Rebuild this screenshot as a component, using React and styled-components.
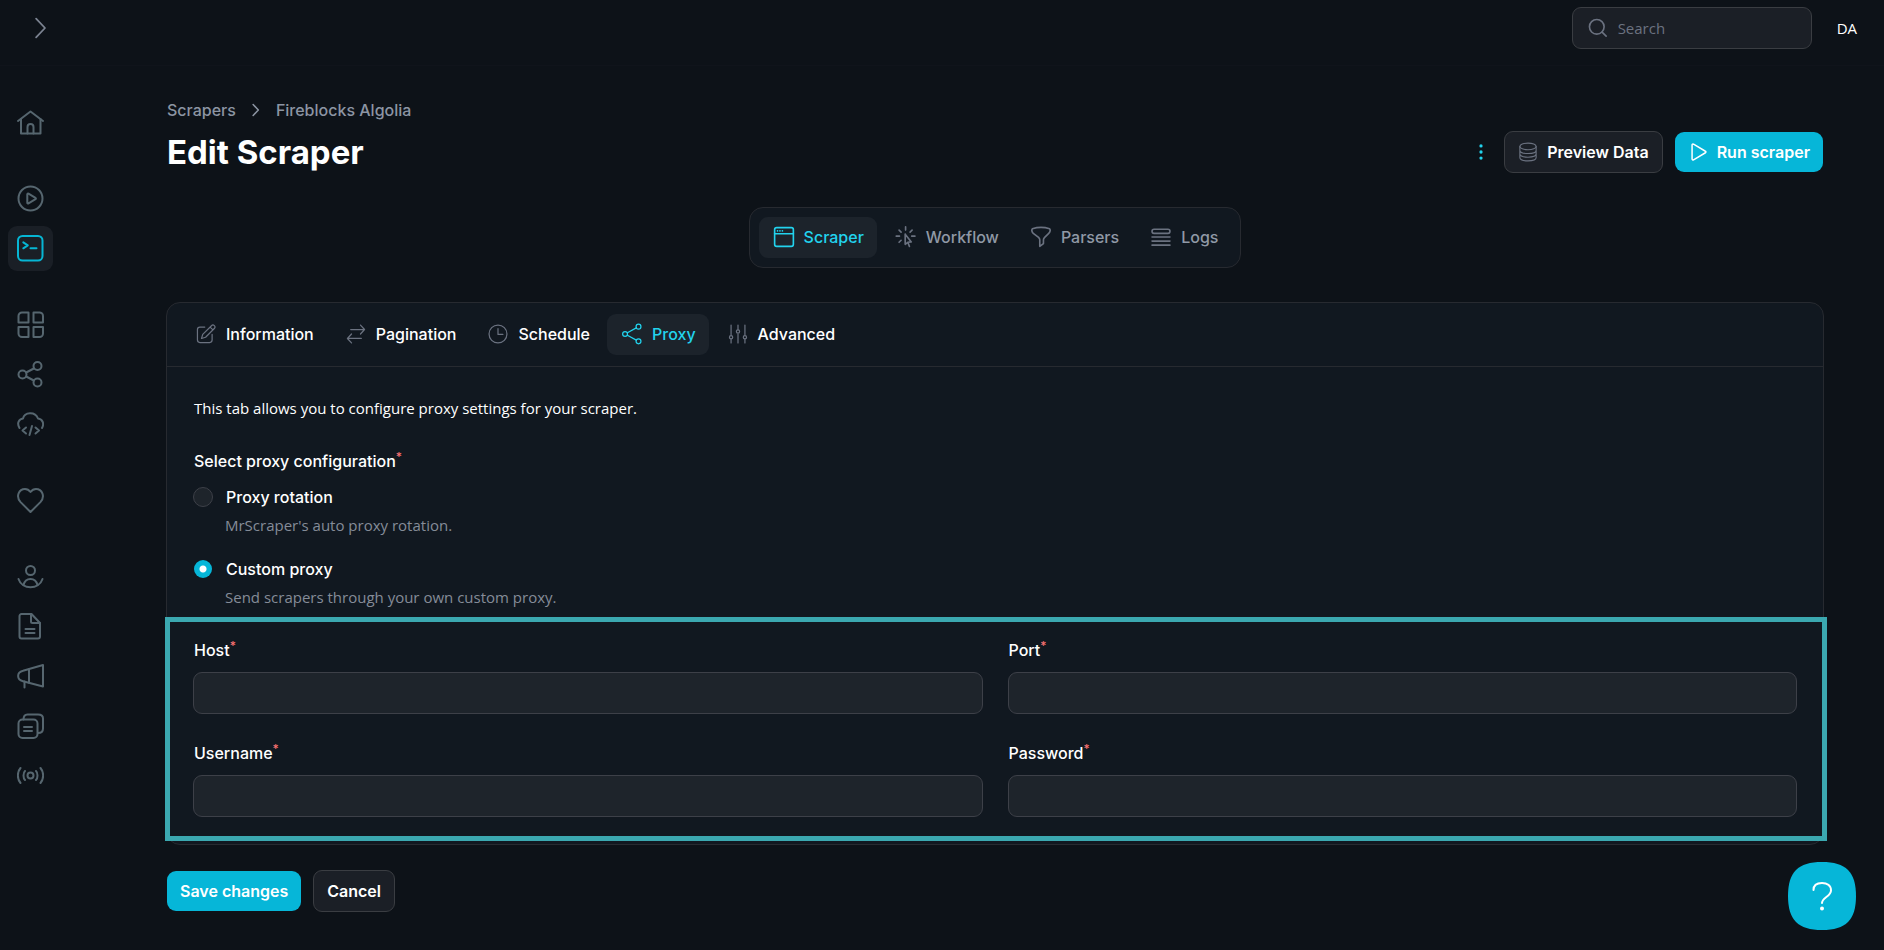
import { useState } from 'react'
import styled, { createGlobalStyle, css } from 'styled-components'

const icons = {
  home: <><path d='M1 12 13.5 2.5 26 12' /><path d='M4 10v14.5h19.5V10' /><path d='M10.5 24.5v-6.5a3 3 0 0 1 6 0v6.5' /></>,
  play: <><circle cx='13.5' cy='13.5' r='12' /><path d='M10.3 9.3v8.4a.8.8 0 0 0 1.2.7l7-4.2a.8.8 0 0 0 0-1.4l-7-4.2a.8.8 0 0 0-1.2.7z' /></>,
  terminal: <><rect x='1' y='1' width='24.5' height='24.5' rx='4.5' /><path d='m6.3 7.3 4.5 3-4.5 3M13.5 13.3h6' /></>,
  grid: <><path d='M5 1.5h6.5v10h-10V5A3.5 3.5 0 0 1 5 1.500z' /><path d='M16.5 1.500H22A3.5 3.5 0 0 1 26 5v6.5h-9.500z' /><path d='M1.5 16h10v10H5a3.5 3.5 0 0 1-3.5-3.500z' /><path d='M16.500 16H26v6.500a3.5 3.5 0 0 1-3.5 3.5h-6z' /></>,
  share: <><circle cx='5.5' cy='13.5' r='4' /><circle cx='20.5' cy='5' r='4' /><circle cx='20.5' cy='21.5' r='4' /><path d='m9.2 11.500 7.600-4M9.2 15.500l7.600 4' /></>,
  cloud: <><path d='M2.500 17C-.5 12 2 8 6 7.500c1.500-6.500 12-7.500 15 0 4.500.5 6.500 5 4 9.500' /><path d='m9 16.500-3.500 3 3.500 3M18.500 16.500l3.500 3-3.500 3M15 15l-2.500 9' /></>,
  heart: <path d='M13.500 25 3.600 15.100C-1.600 9.500 2 2 8 2c2.300 0 4 1 5.500 3C15 3 16.700 2 19 2c6 0 9.600 7.500 4.400 13.100z' />,
  user: <><circle cx='13.5' cy='7.5' r='4.500' /><path d='M1.500 16c3.500 11 20.500 11 24 0' /><path d='M6.500 22c2-8 12-8 14 0' /></>,
  file: <><path d='M4.500 1h10l8.500 9v13.500a2 2 0 0 1-2 2H4.500a2 2 0 0 1-2-2V3a2 2 0 0 1 2-2z' /><path d='M14 1v7.500a1.500 1.500 0 0 0 1.500 1.500H23M8.500 16h9M8.500 20h9' /></>,
  megaphone: <><path d='M26 2v21.500L6 18.300C-.5 16.500-.5 9.500 6 7.800z' /><path d='M12 6.300v13.500M7.500 18.500v6' /></>,
  copy: <><rect x='1.5' y='6.5' width='19' height='18.500' rx='4' /><path d='M6.500 6.500c0-4 1.500-5 4-5H21c3.500 0 5 1.500 5 4v10c0 3-1.500 4.500-5 4.500M7 14h8M7 18h8' /></>,
  signal: <><circle cx='13.5' cy='12.5' r='3' /><path d='M8 8c-2 2-2 7 0 9M19 8c2 2 2 7 0 9M3.500 5c-3.500 4-3.500 11 0 15M23.500 5c3.500 4 3.500 11 0 15' /></>,
  next: <path d='m8 3 10 10.500L8 24' />,
  search: <><circle cx='12' cy='12' r='9' /><path d='m18.500 18.500 5 5' /></>,
  dots: <g fill='currentColor' stroke='none'><circle cx='13.5' cy='6' r='2' /><circle cx='13.5' cy='13.5' r='2' /><circle cx='13.5' cy='21' r='2' /></g>,
  database: <><ellipse cx='13.5' cy='6' rx='11' ry='4.500' /><path d='M2.500 6v15c0 6 22 6 22 0V6M2.500 11c0 6 22 6 22 0M2.500 16c0 6 22 6 22 0' /></>,
  run: <path d='M5.500 4v19c0 1 1 1.500 2 1l16-9.500c.9-.5.9-1.500 0-2l-16-9.500c-1-.5-2 0-2 1z' />,
  browser: <><rect x='2' y='2' width='23' height='23' rx='2.500' /><path d='M2 9.500h23M5.500 6h.1M8.500 6h.1M11.500 6h.1' /></>,
  pointer: <><path d='M13 1v4M5 5l2.500 2.500M21 5l-2.500 2.500M1.500 12.500h4M20.500 12.500h4M7.500 17.500 5 20' /><path d='M12.500 10v12.500l3.200-2.500 2 5M12.500 10l7.500 9.500-4.300.5' /></>,
  funnel: <path d='M3 3.500C9 1.500 18 1.500 24 3.500c1.500 2 .5 4-1 5.500l-5 5c-1 1-1.500 2-1.500 3v4.500l-4.500 3.500V17c0-1-.5-2-1.500-3L4 9C2.500 7.500 1.500 5.500 3 3.500z' />,
  rows: <><rect x='2.5' y='4' width='22' height='5' rx='2.500' /><path d='M2.500 13.500h22M2.500 18.500h22M2.500 23.500h22' /></>,
  edit: <><path d='M12 5H6a3 3 0 0 0-3 3v13a3 3 0 0 0 3 3h12a3 3 0 0 0 3-3v-7' /><path d='m8 19 1.500-5L20.500 3c2-2 5.500 1.500 3.500 3.500L13 17.500zM18.500 5l3.500 3.500' /></>,
  arrows: <><path d='M7 8h17l-5-5.500M24 8l-5 5.500' /><path d='M20 19H3l5-5.500M3 19l5 5.500' /></>,
  clock: <><circle cx='13.5' cy='13.5' r='11' /><path d='M13.500 7v7h6' /></>,
  network: <><circle cx='5' cy='13.5' r='3' /><circle cx='21.5' cy='4.500' r='3' /><circle cx='21.5' cy='22.500' r='3' /><path d='M7.800 12 18.800 6M7.800 15l11 6' /></>,
  sliders: <><path d='M5 2.500v12M5 20v4.500M13.500 2.500V8M13.500 13.500v11M22 2.500v12M22 20v4.500' /><circle cx='5' cy='17.5' r='2' /><circle cx='13.5' cy='10.5' r='2' /><circle cx='22' cy='17.5' r='2' /></>
}

const Icon = ({ name, size = 22, stroke = 1.5 }) => (
  <Svg
    width={size}
    height={size}
    viewBox='0 0 27 27'
    fill='none'
    stroke='currentColor'
    strokeWidth={stroke}
    strokeLinecap='round'
    strokeLinejoin='round'
    aria-hidden='true'
  >
    {icons[name]}
  </Svg>
)

const sideGroups = [
  ['home'],
  ['play', 'terminal'],
  ['grid', 'share', 'cloud'],
  ['heart'],
  ['user', 'file', 'megaphone', 'copy', 'signal']
]

const pageTabs = [
  ['Scraper', 'browser'],
  ['Workflow', 'pointer'],
  ['Parsers', 'funnel'],
  ['Logs', 'rows']
]

const formTabs = [
  ['Information', 'edit'],
  ['Pagination', 'arrows'],
  ['Schedule', 'clock'],
  ['Proxy', 'network'],
  ['Advanced', 'sliders']
]

const fields = [
  ['host', 'Host', 'text'],
  ['port', 'Port', 'text'],
  ['username', 'Username', 'text'],
  ['password', 'Password', 'password']
]

const App = () => {
  const [page, setPage] = useState('Scraper')
  const [tab, setTab] = useState('Proxy')
  const [proxy, setProxy] = useState('custom')

  return (
    <>
      <GlobalStyle />
      <Header>
        <IconBtn aria-label='Expand sidebar'>
          <Icon name='next' size={24} stroke={2} />
        </IconBtn>
        <HeaderRight>
          <SearchBox>
            <Icon name='search' stroke={2} />
            <SearchInput type='search' placeholder='Search' aria-label='Search' />
          </SearchBox>
          <UserBtn>DA</UserBtn>
        </HeaderRight>
      </Header>

      <Layout>
        <Sidebar>
          {sideGroups.map((group) => (
            <SideGroup key={group[0]}>
              {group.map((name) => (
                <SideLink key={name} href={`#${name}`} aria-label={name} $active={name === 'terminal'}>
                  <Icon name={name} size={27} stroke={2} />
                </SideLink>
              ))}
            </SideGroup>
          ))}
        </Sidebar>

        <Main>
          <Breadcrumb>
            <a href='#scrapers'>Scrapers</a>
            <Icon name='next' size={14} stroke={3} />
            <a href='#fireblocks'>Fireblocks Algolia</a>
          </Breadcrumb>
          <TitleRow>
            <Title>Edit Scraper</Title>
            <Actions>
              <MenuBtn aria-label='More actions'>
                <Icon name='dots' />
              </MenuBtn>
              <Btn>
                <Muted><Icon name='database' size={20} /></Muted>
                Preview Data
              </Btn>
              <Btn $primary>
                <Icon name='run' size={20} stroke={2} />
                Run scraper
              </Btn>
            </Actions>
          </TitleRow>

          <PageTabs>
            {pageTabs.map(([label, icon]) => (
              <Tab key={label} $active={page === label} onClick={() => setPage(label)}>
                <Icon name={icon} stroke={2} />
                {label}
              </Tab>
            ))}
          </PageTabs>

          <Card>
            <CardTabs>
              {formTabs.map(([label, icon]) => (
                <Tab key={label} $bright $active={tab === label} onClick={() => setTab(label)}>
                  <Icon name={icon} />
                  {label}
                </Tab>
              ))}
            </CardTabs>
            <CardBody>
              <Intro>This tab allows you to configure proxy settings for your scraper.</Intro>
              <Options role='radiogroup' aria-labelledby='proxy-config'>
                <Label as='p' id='proxy-config'>Select proxy configuration<Required>*</Required></Label>
                <Option>
                  <Radio
                    id='rotation'
                    name='proxy'
                    checked={proxy === 'rotation'}
                    onChange={() => setProxy('rotation')}
                  />
                  <Label htmlFor='rotation'>Proxy rotation</Label>
                  <Hint>MrScraper's auto proxy rotation.</Hint>
                </Option>
                <Option>
                  <Radio
                    id='custom'
                    name='proxy'
                    checked={proxy === 'custom'}
                    onChange={() => setProxy('custom')}
                  />
                  <Label htmlFor='custom'>Custom proxy</Label>
                  <Hint>Send scrapers through your own custom proxy.</Hint>
                </Option>
              </Options>
              <Fields>
                {fields.map(([id, label, type]) => (
                  <Field key={id}>
                    <Label htmlFor={id}>{label}<Required>*</Required></Label>
                    <Input id={id} type={type} />
                  </Field>
                ))}
              </Fields>
            </CardBody>
          </Card>

          <FormActions>
            <Btn $primary>Save changes</Btn>
            <Btn>Cancel</Btn>
          </FormActions>
        </Main>
      </Layout>

      <HelpBtn aria-label='Help'>
        <svg width='68' height='68' viewBox='0 0 68 68' fill='none' aria-hidden='true'>
          <path d='M34 0C58 0 68 10 68 34S58 68 34 68 0 58 0 34 10 0 34 0z' fill='#06b6d8' />
          <path d='M25.500 28c0-5 3.500-7 8.500-7s9 2.500 9 7.500c0 6-9 7-9 12.500' stroke='#fff' strokeWidth='2' strokeLinecap='round' />
          <circle cx='34' cy='46.500' r='2' fill='#fff' />
        </svg>
      </HelpBtn>
    </>
  )
}

export default App

const GlobalStyle = createGlobalStyle`
  *{
    box-sizing: border-box;
  }

  body{
    margin: 0;
    background: #0d1218;
    color: #fff;
    font-family: Inter, sans-serif;
    font-size: 16px;
    line-height: 24px;
  }

  p, h1{
    margin: 0;
  }

  a{
    color: inherit;
    text-decoration: none;
  }

  button, input{
    font: inherit;
    color: inherit;
  }

  button{
    border: 0;
    background: none;
    padding: 0;
    cursor: pointer;
  }
`

const Svg = styled.svg`
  display: block;
  flex: none;
`

const Header = styled.header`
  display: flex;
  justify-content: space-between;
  height: 66px;
  padding: 7px 27px 0 29px;
  border-bottom: 1px solid #10141b;
`

const IconBtn = styled.button`
  height: 42px;
  color: #7b8391;
`

const HeaderRight = styled.div`
  display: flex;
  align-items: flex-start;
  gap: 25px;
`

const SearchBox = styled.label`
  display: flex;
  align-items: center;
  gap: 9px;
  width: 240px;
  height: 42px;
  padding: 0 14px;
  border: 1px solid #3a3d42;
  border-radius: 9px;
  background: #1b1f26;
  color: #6b7280;
`

const SearchInput = styled.input`
  flex: 1;
  min-width: 0;
  padding: 0;
  border: 0;
  outline: 0;
  background: none;
  font-family: 'Open Sans', sans-serif;
  font-size: 15px;

  &::placeholder{
    color: #6b7280;
  }
`

const UserBtn = styled.button`
  height: 42px;
  font-family: 'Open Sans', sans-serif;
  font-size: 15px;
`

const Layout = styled.div`
  display: flex;
`

const Sidebar = styled.nav`
  display: flex;
  flex-direction: column;
  gap: 31px;
  padding: 34px 8px;
`

const SideGroup = styled.div`
  display: flex;
  flex-direction: column;
  gap: 5px;
`

const SideLink = styled.a`
  display: grid;
  place-items: center;
  width: 45px;
  height: 45px;
  border-radius: 9px;
  color: ${({ $active }) => $active ? '#06b6d4' : '#56666f'};
  background: ${({ $active }) => $active ? '#1a1f26' : 'none'};
`

const Main = styled.main`
  flex: 1;
  min-width: 0;
  padding: 32px 61px 34px 106px;
`

const Breadcrumb = styled.nav`
  display: flex;
  align-items: center;
  gap: 13px;
  margin-bottom: 9px;
  color: #8c95a3;
  font-weight: 500;
`

const TitleRow = styled.div`
  display: flex;
  align-items: center;
  justify-content: space-between;
  height: 42px;
`

const Title = styled.h1`
  font-size: 33px;
  line-height: 42px;
  font-weight: 700;
`

const Actions = styled.div`
  display: flex;
  align-items: center;
  gap: 12px;
`

const MenuBtn = styled.button`
  color: #22d3ee;
`

const Btn = styled.button`
  display: flex;
  align-items: center;
  gap: 9px;
  height: 42px;
  padding: 0 13px;
  border: 1px solid #3a3d42;
  border-radius: 9px;
  background: #1b1f26;
  font-weight: 600;

  ${({ $primary }) => $primary && css`
    height: 40px;
    border: 0;
    background: #06b6d8;
  `}
`

const Muted = styled.span`
  color: #6b7280;
`

const PageTabs = styled.div`
  display: flex;
  gap: 4px;
  width: fit-content;
  margin: 34px auto;
  padding: 9px;
  border: 1px solid #272a30;
  border-radius: 14px;
  background: #111820;
`

const Tab = styled.button`
  display: flex;
  align-items: center;
  gap: 9px;
  height: 41px;
  padding: 0 13px 2px 14px;
  border-radius: 9px;
  color: ${({ $bright }) => $bright ? '#fff' : '#9099a6'};
  font-weight: 500;

  svg{
    color: #6b7280;
  }

  ${({ $active }) => $active && css`
    background: #1c232b;
    color: #22d3ee;

    svg{
      color: #22d3ee;
    }
  `}
`

const Card = styled.section`
  margin: 0 -1px;
  border: 1px solid #272a30;
  border-radius: 14px;
  background: #111820;
`

const CardTabs = styled.div`
  display: flex;
  gap: 4px;
  padding: 11px 14px;
  border-bottom: 1px solid #272a30;
`

const CardBody = styled.div`
  padding: 29px 26px 27px;
`

const Intro = styled.p`
  padding-left: 1px;
  font-family: 'Open Sans', sans-serif;
  font-size: 15px;
`

const Options = styled.div`
  padding: 29px 0;
`

const Option = styled.div`
  display: grid;
  grid-template-columns: 20px 1fr;
  align-items: center;
  gap: 4px 12px;

  & + &{
    margin-top: 20px;
  }

  p + &{
    margin-top: 12px;
  }
`

const Label = styled.label`
  padding-left: 1px;
  font-weight: 500;
`

const Required = styled.sup`
  color: #f87171;
  font-size: 12px;
  line-height: 0;
`

const Radio = styled.input.attrs({ type: 'radio' })`
  appearance: none;
  width: 20px;
  height: 20px;
  margin: 0;
  border: 1px solid #3d4048;
  border-radius: 50%;
  background: #1e242b;

  &:checked{
    border-color: transparent;
    background: radial-gradient(circle, #fff 3px, #06b6d8 4px) padding-box;
  }
`

const Hint = styled.p`
  grid-column: 2;
  color: #858c98;
  font-family: 'Open Sans', sans-serif;
  font-size: 15px;
`

const Fields = styled.div`
  position: relative;
  display: grid;
  grid-template-columns: 1fr 1fr;
  gap: 27px 25px;

  &::after{
    content: '';
    position: absolute;
    inset: -21px -30px -24px -28px;
    border: 5px solid #3ba8b0;
    pointer-events: none;
  }
`

const Field = styled.div`
  display: flex;
  flex-direction: column;
  gap: 10px;
`

const Input = styled.input`
  width: 100%;
  height: 42px;
  padding: 0 14px;
  border: 1px solid #3d4048;
  border-radius: 9px;
  background: #1e242b;
`

const FormActions = styled.div`
  display: flex;
  align-items: center;
  gap: 12px;
  margin-top: 25px;
`

const HelpBtn = styled.button`
  position: fixed;
  right: 28px;
  bottom: 20px;
  height: 68px;
`
